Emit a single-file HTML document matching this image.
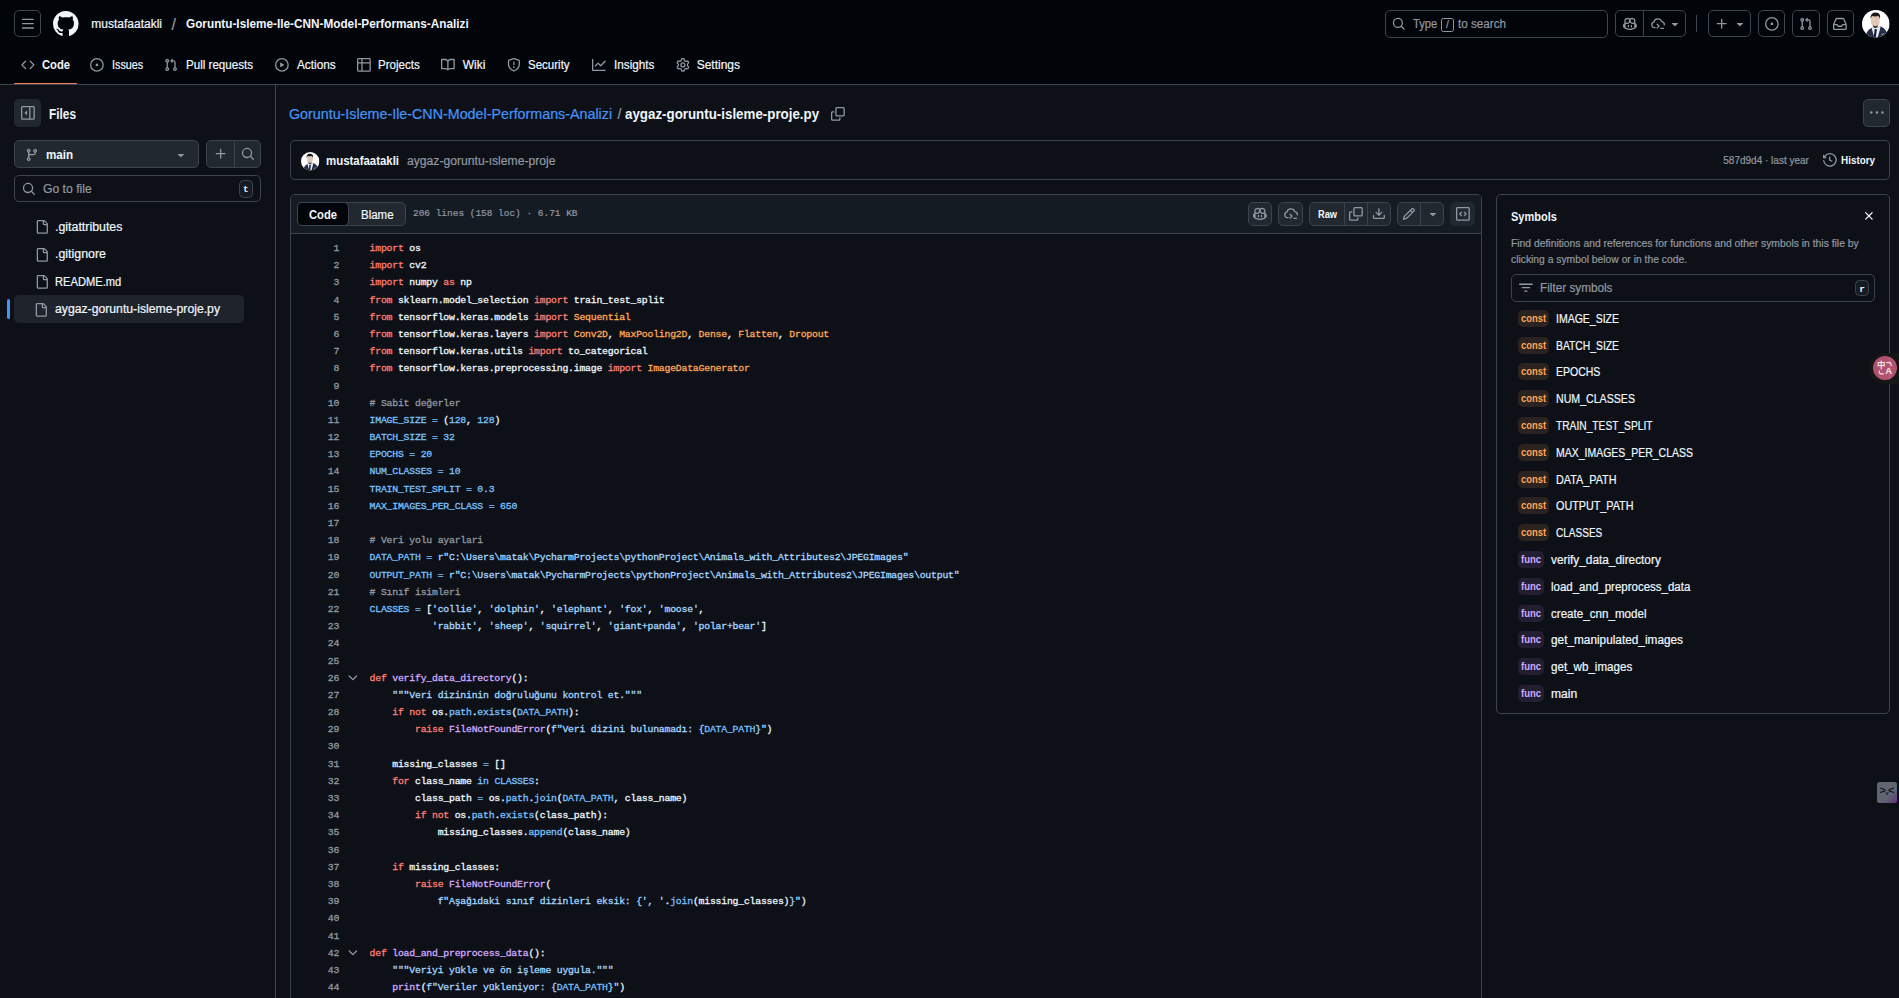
<!DOCTYPE html>
<html lang="en"><head><meta charset="utf-8"><title>Goruntu-Isleme-Ile-CNN-Model-Performans-Analizi/aygaz-goruntu-isleme-proje.py at main</title>
<style>
html,body{margin:0;padding:0;background:#0d1117;}
body{width:1899px;height:998px;overflow:hidden;position:relative;font-family:"Liberation Sans", sans-serif;color:#f0f6fc;}
.b,.i,.t,.ln,.cl{position:absolute;}
.i{overflow:visible;}
.t,.ln,.cl{white-space:pre;}
.t{transform-origin:0 0;-webkit-text-stroke:0.2px currentColor;}
.ln,.cl{font-family:"Liberation Mono", monospace;font-size:9.8px;line-height:13px;letter-spacing:-0.2080px;}
.ln,.cl{-webkit-text-stroke:0.3px currentColor;}
.ln{left:300px;width:39.21px;text-align:right;color:#9198a1;}
.cl{left:369.6px;color:#f0f6fc;}
.k{color:#ff7b72}.c{color:#79c0ff}.s{color:#a5d6ff}.e{color:#d2a8ff}.v{color:#ffa657}.m{color:#9198a1}
</style></head><body>
<div class="b" style="left:0px;top:0px;width:1899px;height:84px;background:#010409;"></div>
<div class="b" style="left:0px;top:84px;width:1899px;height:1px;background:#3d444d;"></div>
<div class="b" style="left:14px;top:10px;width:27px;height:27px;border:1px solid #3d444d;border-radius:5px;box-sizing:border-box;"></div>
<svg class="i" style="left:20.6px;top:16.6px;width:13.8px;height:13.8px;fill:#9198a1;" viewBox="0 0 16 16"><path d="M1 2.75A.75.75 0 0 1 1.75 2h12.5a.75.75 0 0 1 0 1.5H1.75A.75.75 0 0 1 1 2.75Zm0 5A.75.75 0 0 1 1.75 7h12.5a.75.75 0 0 1 0 1.5H1.75A.75.75 0 0 1 1 7.75ZM1.75 12h12.5a.75.75 0 0 1 0 1.5H1.75a.75.75 0 0 1 0-1.5Z"/></svg>
<svg class="i" style="left:52.9px;top:10.8px;width:25.6px;height:25.6px;fill:#f0f6fc;" viewBox="0 0 16 16"><path d="M8 0c4.42 0 8 3.58 8 8a8.013 8.013 0 0 1-5.45 7.59c-.4.08-.55-.17-.55-.38 0-.27.01-1.13.01-2.2 0-.75-.25-1.23-.54-1.48 1.78-.2 3.65-.88 3.65-3.95 0-.88-.31-1.59-.82-2.15.08-.2.36-1.02-.08-2.12 0 0-.67-.22-2.2.82-.64-.18-1.32-.27-2-.27-.68 0-1.36.09-2 .27-1.53-1.03-2.2-.82-2.2-.82-.44 1.1-.16 1.92-.08 2.12-.51.56-.82 1.28-.82 2.15 0 3.06 1.86 3.75 3.64 3.95-.23.2-.44.55-.51 1.07-.46.21-1.61.55-2.33-.66-.15-.24-.6-.83-1.23-.82-.67.01-.27.38.01.53.34.19.73.9.82 1.13.16.45.68 1.31 2.69.94 0 .67.01 1.3.01 1.49 0 .21-.15.45-.55.38A7.995 7.995 0 0 1 0 8c0-4.42 3.58-8 8-8Z"/></svg>
<div class="b" style="left:1385px;top:10px;width:223px;height:27.5px;border:1px solid #3d444d;border-radius:5px;box-sizing:border-box;"></div>
<svg class="i" style="left:1392.3px;top:17px;width:13.5px;height:13.5px;fill:#9198a1;" viewBox="0 0 16 16"><path d="M10.68 11.74a6 6 0 0 1-7.922-8.982 6 6 0 0 1 8.982 7.922l3.04 3.04a.749.749 0 0 1-.326 1.275.749.749 0 0 1-.734-.215ZM11.5 7a4.499 4.499 0 1 0-8.997 0A4.499 4.499 0 0 0 11.5 7Z"/></svg>
<div class="b" style="left:1441px;top:18px;width:13px;height:13.6px;border:1px solid #9198a1;border-radius:2.5px;box-sizing:border-box;"></div>
<div class="b" style="left:1615px;top:10px;width:71px;height:27px;border:1px solid #3d444d;border-radius:5px;box-sizing:border-box;"></div>
<div class="b" style="left:1643px;top:10px;width:1px;height:27px;background:#3d444d;"></div>
<svg class="i" style="left:1623.2px;top:16.9px;width:13.8px;height:13.8px;fill:#9198a1;" viewBox="0 0 16 16"><path d="M7.998 15.035c-4.562 0-7.873-2.914-7.998-3.749V9.338c.085-.628.677-1.686 1.588-2.065.013-.07.024-.143.036-.218.029-.183.06-.384.126-.612-.201-.508-.254-1.084-.254-1.656 0-.87.128-1.769.693-2.484.579-.733 1.494-1.124 2.724-1.261 1.206-.134 2.262.034 2.944.765.05.053.096.108.139.165.044-.057.094-.112.143-.165.682-.731 1.738-.899 2.944-.765 1.23.137 2.145.528 2.724 1.261.566.715.693 1.614.693 2.484 0 .572-.053 1.148-.254 1.656.066.228.098.429.126.612.012.076.024.148.037.218.924.385 1.522 1.471 1.591 2.095v1.872c0 .766-3.351 3.795-8.002 3.795Zm0-1.485c2.28 0 4.584-1.11 5.002-1.433V7.862l-.023-.116c-.49.21-1.075.291-1.727.291-1.146 0-2.059-.327-2.71-.991A3.222 3.222 0 0 1 8 6.303a3.24 3.24 0 0 1-.544.743c-.65.664-1.563.991-2.71.991-.652 0-1.236-.081-1.727-.291l-.023.116v4.255c.419.323 2.722 1.433 5.002 1.433ZM6.762 2.83c-.193-.206-.637-.413-1.682-.297-1.019.113-1.479.404-1.713.7-.247.312-.369.789-.369 1.554 0 .793.129 1.171.308 1.371.162.181.519.379 1.442.379.853 0 1.339-.235 1.638-.54.315-.322.527-.827.617-1.553.117-.935-.037-1.395-.241-1.614Zm4.155-.297c-1.044-.116-1.488.091-1.681.297-.204.219-.359.679-.242 1.614.091.726.303 1.231.618 1.553.299.305.784.54 1.638.54.922 0 1.28-.198 1.442-.379.179-.2.308-.578.308-1.371 0-.765-.123-1.242-.37-1.554-.233-.296-.693-.587-1.713-.7Z M6.25 9.037a.75.75 0 0 1 .75.75v1.501a.75.75 0 0 1-1.5 0V9.787a.75.75 0 0 1 .75-.75Zm4.25.75v1.501a.75.75 0 0 1-1.5 0V9.787a.75.75 0 0 1 1.5 0Z"/></svg>
<svg class="i" style="left:1651px;top:16.6px;width:14px;height:14px;fill:none;stroke:#9198a1;stroke-width:1.5;stroke-linecap:round;stroke-linejoin:round" viewBox="0 0 16 16"><path d="M4.6 12.2H4.2A3.2 3.2 0 0 1 3.3 5.9 4.6 4.6 0 0 1 12.2 5.3 3.4 3.4 0 0 1 15.2 8.9"/><path d="M7 8.3l2.2 2.1L7 12.6"/><path d="M11.3 12.9h3"/></svg>
<svg class="i" style="left:1668px;top:17px;width:13.8px;height:13.8px;fill:#9198a1;" viewBox="0 0 16 16"><path d="m4.427 7.427 3.396 3.396a.25.25 0 0 0 .354 0l3.396-3.396A.25.25 0 0 0 11.396 7H4.604a.25.25 0 0 0-.177.427Z"/></svg>
<div class="b" style="left:1696px;top:15px;width:1px;height:17px;background:#3d444d;"></div>
<div class="b" style="left:1708px;top:10px;width:43px;height:27px;border:1px solid #3d444d;border-radius:5px;box-sizing:border-box;"></div>
<svg class="i" style="left:1714.8px;top:17.2px;width:13.8px;height:13.8px;fill:#9198a1;" viewBox="0 0 16 16"><path d="M7.75 2a.75.75 0 0 1 .75.75V7h4.25a.75.75 0 0 1 0 1.5H8.5v4.25a.75.75 0 0 1-1.5 0V8.5H2.75a.75.75 0 0 1 0-1.5H7V2.75A.75.75 0 0 1 7.75 2Z"/></svg>
<svg class="i" style="left:1733px;top:17.2px;width:13.8px;height:13.8px;fill:#9198a1;" viewBox="0 0 16 16"><path d="m4.427 7.427 3.396 3.396a.25.25 0 0 0 .354 0l3.396-3.396A.25.25 0 0 0 11.396 7H4.604a.25.25 0 0 0-.177.427Z"/></svg>
<div class="b" style="left:1758px;top:10px;width:27.3px;height:27px;border:1px solid #3d444d;border-radius:5px;box-sizing:border-box;"></div>
<svg class="i" style="left:1764.9px;top:16.9px;width:13.8px;height:13.8px;fill:#9198a1;" viewBox="0 0 16 16"><path d="M8 9.5a1.5 1.5 0 1 0 0-3 1.5 1.5 0 0 0 0 3Z M8 0a8 8 0 1 1 0 16A8 8 0 0 1 8 0ZM1.5 8a6.5 6.5 0 1 0 13 0 6.5 6.5 0 0 0-13 0Z"/></svg>
<div class="b" style="left:1792.3px;top:10px;width:27.4px;height:27px;border:1px solid #3d444d;border-radius:5px;box-sizing:border-box;"></div>
<svg class="i" style="left:1798.9px;top:16.9px;width:13.8px;height:13.8px;fill:#9198a1;" viewBox="0 0 16 16"><path d="M1.5 3.25a2.25 2.25 0 1 1 3 2.122v5.256a2.251 2.251 0 1 1-1.5 0V5.372A2.25 2.25 0 0 1 1.5 3.25Zm5.677-.177L9.573.677A.25.25 0 0 1 10 .854V2.5h1A2.5 2.5 0 0 1 13.5 5v5.628a2.251 2.251 0 1 1-1.5 0V5a1 1 0 0 0-1-1h-1v1.646a.25.25 0 0 1-.427.177L7.177 3.427a.25.25 0 0 1 0-.354ZM3.75 2.5a.75.75 0 1 0 0 1.5.75.75 0 0 0 0-1.5Zm0 9.5a.75.75 0 1 0 0 1.5.75.75 0 0 0 0-1.5Zm8.25.75a.75.75 0 1 0 1.5 0 .75.75 0 0 0-1.5 0Z"/></svg>
<div class="b" style="left:1826.5px;top:10px;width:27.5px;height:27px;border:1px solid #3d444d;border-radius:5px;box-sizing:border-box;"></div>
<svg class="i" style="left:1832.9px;top:16.9px;width:13.8px;height:13.8px;fill:#9198a1;" viewBox="0 0 16 16"><path d="M2.8 2.06A1.75 1.75 0 0 1 4.41 1h7.18c.7 0 1.333.417 1.61 1.06l2.74 6.395c.04.093.06.194.06.295v4.5A1.75 1.75 0 0 1 14.25 15H1.75A1.75 1.75 0 0 1 0 13.25v-4.5c0-.101.02-.202.06-.295Zm1.61.44a.25.25 0 0 0-.23.152L1.887 8H4.75a.75.75 0 0 1 .6.3L6.625 10h2.75l1.275-1.7a.75.75 0 0 1 .6-.3h2.863L11.82 2.652a.25.25 0 0 0-.23-.152Zm10.09 7h-2.875l-1.275 1.7a.75.75 0 0 1-.6.3h-3.5a.75.75 0 0 1-.6-.3L4.375 9.5H1.5v3.75c0 .138.112.25.25.25h12.5a.25.25 0 0 0 .25-.25Z"/></svg>
<svg class="i" style="left:1861.8px;top:9.7px;width:27.6px;height:27.6px" viewBox="0 0 28 28"><defs><clipPath id="av"><circle cx="14" cy="14" r="14"/></clipPath></defs><g clip-path="url(#av)"><rect width="28" height="28" fill="#ffffff"/><path d="M9.3 13.2c-.4-2.500-.3-5.200.7-6.500 1.500-1.400 5.400-1.300 7 .1 1 1.300 1.100 4 .7 6.400-.3 2-1.700 4.300-4.200 4.300s-3.900-2.300-4.200-4.300z" fill="#e2c7b7"/><path d="M8.700 9.400c-.5-3.200 1-5.900 3.300-6.600 2.600-.8 5.300.2 6 2 .6 1.500.4 3.300.1 4.600-.3-1.600-.8-2.700-1.600-3.200-1.600.5-4.300.5-5.900 0-.9.600-1.500 1.700-1.900 3.200z" fill="#1d1a1c"/><path d="M11.300 15.300c.7.900 1.500 1.300 2.300 1.300s1.700-.4 2.400-1.300l-.3 2.100-2.100 1.200-2-1.200z" fill="#2b2322"/><path d="M3.800 28c.2-5.500 2.600-8.700 7-10.300l2.700 2.800 4.300-4.200c4.800 1.500 8 5.200 8.700 11.700z" fill="#262e47"/><path d="M10.800 17.500l-.9 1.300 2.500 9.200h3.500l3-10.900-1-.9-4.300 4.300z" fill="#e6eef8"/><path d="M12.900 19.400l1.700 0 .4 1.200-.9 7.400h-2.300l.9-7.400z" fill="#1b2033"/><path d="M19.500 24.800l3-1.100.2.500-3 1.100z" fill="#dfe6f0"/></g></svg>
<svg class="i" style="left:21px;top:57.8px;width:13.8px;height:13.8px;fill:#9198a1;" viewBox="0 0 16 16"><path d="m11.28 3.22 4.25 4.25a.75.75 0 0 1 0 1.06l-4.25 4.25a.749.749 0 0 1-1.275-.326.749.749 0 0 1 .215-.734L13.94 8l-3.72-3.72a.749.749 0 0 1 .326-1.275.749.749 0 0 1 .734.215Zm-6.56 0a.751.751 0 0 1 1.042.018.751.751 0 0 1 .018 1.042L2.06 8l3.72 3.72a.749.749 0 0 1-.326 1.275.749.749 0 0 1-.734-.215L.47 8.53a.75.75 0 0 1 0-1.06Z"/></svg>
<svg class="i" style="left:90px;top:57.8px;width:13.8px;height:13.8px;fill:#9198a1;" viewBox="0 0 16 16"><path d="M8 9.5a1.5 1.5 0 1 0 0-3 1.5 1.5 0 0 0 0 3Z M8 0a8 8 0 1 1 0 16A8 8 0 0 1 8 0ZM1.5 8a6.5 6.5 0 1 0 13 0 6.5 6.5 0 0 0-13 0Z"/></svg>
<svg class="i" style="left:164px;top:57.8px;width:13.8px;height:13.8px;fill:#9198a1;" viewBox="0 0 16 16"><path d="M1.5 3.25a2.25 2.25 0 1 1 3 2.122v5.256a2.251 2.251 0 1 1-1.5 0V5.372A2.25 2.25 0 0 1 1.5 3.25Zm5.677-.177L9.573.677A.25.25 0 0 1 10 .854V2.5h1A2.5 2.5 0 0 1 13.5 5v5.628a2.251 2.251 0 1 1-1.5 0V5a1 1 0 0 0-1-1h-1v1.646a.25.25 0 0 1-.427.177L7.177 3.427a.25.25 0 0 1 0-.354ZM3.75 2.5a.75.75 0 1 0 0 1.5.75.75 0 0 0 0-1.5Zm0 9.5a.75.75 0 1 0 0 1.5.75.75 0 0 0 0-1.5Zm8.25.75a.75.75 0 1 0 1.5 0 .75.75 0 0 0-1.5 0Z"/></svg>
<svg class="i" style="left:275px;top:57.8px;width:13.8px;height:13.8px;fill:#9198a1;" viewBox="0 0 16 16"><path d="M8 0a8 8 0 1 1 0 16A8 8 0 0 1 8 0ZM1.5 8a6.5 6.5 0 1 0 13 0 6.5 6.5 0 0 0-13 0Zm4.879-2.773 4.264 2.559a.25.25 0 0 1 0 .428l-4.264 2.559A.25.25 0 0 1 6 10.559V5.442a.25.25 0 0 1 .379-.215Z"/></svg>
<svg class="i" style="left:357px;top:57.8px;width:13.8px;height:13.8px;fill:#9198a1;" viewBox="0 0 16 16"><path d="M0 1.75C0 .784.784 0 1.75 0h12.5C15.216 0 16 .784 16 1.75v12.5A1.75 1.75 0 0 1 14.25 16H1.75A1.75 1.75 0 0 1 0 14.25ZM6.5 6.5v8h7.75a.25.25 0 0 0 .25-.25V6.5Zm8-1.5V1.75a.25.25 0 0 0-.25-.25H6.5V5Zm-13 1.5v7.75c0 .138.112.25.25.25H5v-8ZM5 5V1.5H1.75a.25.25 0 0 0-.25.25V5Z"/></svg>
<svg class="i" style="left:441px;top:57.8px;width:13.8px;height:13.8px;fill:#9198a1;" viewBox="0 0 16 16"><path d="M0 1.75A.75.75 0 0 1 .75 1h4.253c1.227 0 2.317.59 3 1.501A3.743 3.743 0 0 1 11.006 1h4.245a.75.75 0 0 1 .75.75v10.5a.75.75 0 0 1-.75.75h-4.507a2.25 2.25 0 0 0-1.591.659l-.622.621a.75.75 0 0 1-1.06 0l-.622-.621A2.25 2.25 0 0 0 5.258 13H.75a.75.75 0 0 1-.75-.75Zm7.251 10.324.004-5.073-.002-2.253A2.25 2.25 0 0 0 5.003 2.5H1.5v9h3.757a3.75 3.75 0 0 1 1.994.574ZM8.755 4.75l-.004 7.322a3.752 3.752 0 0 1 1.992-.572H14.5v-9h-3.495a2.25 2.25 0 0 0-2.25 2.25Z"/></svg>
<svg class="i" style="left:507px;top:57.8px;width:13.8px;height:13.8px;fill:#9198a1;" viewBox="0 0 16 16"><path d="M7.467.133a1.748 1.748 0 0 1 1.066 0l5.25 1.68A1.75 1.75 0 0 1 15 3.48V7c0 1.566-.32 3.182-1.303 4.682-.983 1.498-2.585 2.813-5.032 3.855a1.697 1.697 0 0 1-1.33 0c-2.447-1.042-4.049-2.357-5.032-3.855C1.32 10.182 1 8.566 1 7V3.48a1.75 1.75 0 0 1 1.217-1.667Zm.61 1.429a.25.25 0 0 0-.153 0l-5.25 1.68a.25.25 0 0 0-.174.238V7c0 1.358.275 2.666 1.057 3.86.784 1.194 2.121 2.34 4.366 3.297a.196.196 0 0 0 .154 0c2.245-.956 3.582-2.104 4.366-3.298C13.225 9.666 13.5 8.36 13.5 7V3.48a.251.251 0 0 0-.174-.237l-5.25-1.68ZM8.75 4.75v3a.75.75 0 0 1-1.5 0v-3a.75.75 0 0 1 1.5 0ZM9 10.5a1 1 0 1 1-2 0 1 1 0 0 1 2 0Z"/></svg>
<svg class="i" style="left:591.7px;top:57.8px;width:13.8px;height:13.8px;fill:#9198a1;" viewBox="0 0 16 16"><path d="M1.5 1.75V13.5h13.75a.75.75 0 0 1 0 1.5H.75a.75.75 0 0 1-.75-.75V1.75a.75.75 0 0 1 1.5 0Zm14.28 2.53-5.25 5.25a.75.75 0 0 1-1.06 0L7 7.06 4.28 9.78a.751.751 0 0 1-1.042-.018.751.751 0 0 1-.018-1.042l3.25-3.25a.75.75 0 0 1 1.06 0L10 7.94l4.72-4.72a.751.751 0 0 1 1.042.018.751.751 0 0 1 .018 1.042Z"/></svg>
<svg class="i" style="left:676px;top:57.8px;width:13.8px;height:13.8px;fill:#9198a1;" viewBox="0 0 16 16"><path d="M8 0a8.2 8.2 0 0 1 .701.031C9.444.095 9.99.645 10.16 1.29l.288 1.107c.018.066.079.158.212.224.231.114.454.243.668.386.123.082.233.09.299.071l1.103-.303c.644-.176 1.392.021 1.82.63.27.385.506.792.704 1.218.315.675.111 1.422-.364 1.891l-.814.806c-.049.048-.098.147-.088.294.016.257.016.515 0 .772-.01.147.038.246.088.294l.814.806c.475.469.679 1.216.364 1.891a7.977 7.977 0 0 1-.704 1.217c-.428.61-1.176.807-1.82.63l-1.102-.302c-.067-.019-.177-.011-.3.071a5.909 5.909 0 0 1-.668.386c-.133.066-.194.158-.211.224l-.29 1.106c-.168.646-.715 1.196-1.458 1.26a8.006 8.006 0 0 1-1.402 0c-.743-.064-1.289-.614-1.458-1.26l-.289-1.106c-.018-.066-.079-.158-.212-.224a5.738 5.738 0 0 1-.668-.386c-.123-.082-.233-.09-.299-.071l-1.103.303c-.644.176-1.392-.021-1.82-.63a8.12 8.12 0 0 1-.704-1.218c-.315-.675-.111-1.422.363-1.891l.815-.806c.05-.048.098-.147.088-.294a6.214 6.214 0 0 1 0-.772c.01-.147-.038-.246-.088-.294l-.815-.806C.635 6.045.431 5.298.746 4.623a7.92 7.92 0 0 1 .704-1.217c.428-.61 1.176-.807 1.82-.63l1.102.302c.067.019.177.011.3-.071.214-.143.437-.272.668-.386.133-.066.194-.158.211-.224l.29-1.106C6.009.645 6.556.095 7.299.03 7.53.01 7.764 0 8 0Zm-.571 1.525c-.036.003-.108.036-.137.146l-.289 1.105c-.147.561-.549.967-.998 1.189-.173.086-.34.183-.5.29-.417.278-.97.423-1.529.27l-1.103-.303c-.109-.03-.175.016-.195.045-.22.312-.412.644-.573.99-.014.031-.021.11.059.19l.815.806c.411.406.562.957.53 1.456a4.709 4.709 0 0 0 0 .582c.032.499-.119 1.05-.53 1.456l-.815.806c-.081.08-.073.159-.059.19.162.346.353.677.573.989.02.03.085.076.195.046l1.102-.303c.56-.153 1.113-.008 1.53.27.161.107.328.204.501.29.447.222.85.629.997 1.189l.289 1.105c.029.109.101.143.137.146a6.6 6.6 0 0 0 1.142 0c.036-.003.108-.036.137-.146l.289-1.105c.147-.561.549-.967.998-1.189.173-.086.34-.183.5-.29.417-.278.97-.423 1.529-.27l1.103.303c.109.029.175-.016.195-.045.22-.313.411-.644.573-.99.014-.031.021-.11-.059-.19l-.815-.806c-.411-.406-.562-.957-.53-1.456a4.709 4.709 0 0 0 0-.582c-.032-.499.119-1.05.53-1.456l.815-.806c.081-.08.073-.159.059-.19a6.464 6.464 0 0 0-.573-.989c-.02-.03-.085-.076-.195-.046l-1.102.303c-.56.153-1.113.008-1.53-.27a4.44 4.44 0 0 0-.501-.29c-.447-.222-.85-.629-.997-1.189l-.289-1.105c-.029-.11-.101-.143-.137-.146a6.6 6.6 0 0 0-1.142 0ZM11 8a3 3 0 1 1-6 0 3 3 0 0 1 6 0ZM9.5 8a1.5 1.5 0 1 0-3.001.001A1.5 1.5 0 0 0 9.5 8Z"/></svg>
<div class="b" style="left:14px;top:82.7px;width:62.5px;height:1.8px;background:#f78166;border-radius:1px;"></div>
<div class="b" style="left:275px;top:85px;width:1px;height:913px;background:#3d444d;"></div>
<div class="b" style="left:14px;top:99px;width:27px;height:27.5px;background:#212830;border-radius:5px;"></div>
<svg class="i" style="left:20.9px;top:105.9px;width:13.8px;height:13.8px;fill:#9198a1;" viewBox="0 0 16 16"><path d="m4.177 7.823 2.396-2.396A.25.25 0 0 1 7 5.604v4.792a.25.25 0 0 1-.427.177L4.177 8.177a.25.25 0 0 1 0-.354Z M0 1.75C0 .784.784 0 1.75 0h12.5C15.216 0 16 .784 16 1.75v12.5A1.75 1.75 0 0 1 14.25 16H1.75A1.75 1.75 0 0 1 0 14.25Zm1.75-.25a.25.25 0 0 0-.25.25v12.5c0 .138.112.25.25.25H9.5v-13Zm12.5 13a.25.25 0 0 0 .25-.25V1.75a.25.25 0 0 0-.25-.25H11v13Z"/></svg>
<div class="b" style="left:14px;top:140px;width:185px;height:28px;background:#212830;border:1px solid #3d444d;border-radius:5px;box-sizing:border-box;"></div>
<svg class="i" style="left:24.8px;top:148.2px;width:13.8px;height:13.8px;fill:#9198a1;" viewBox="0 0 16 16"><path d="M9.5 3.25a2.25 2.25 0 1 1 3 2.122V6A2.5 2.5 0 0 1 10 8.5H6a1 1 0 0 0-1 1v1.128a2.251 2.251 0 1 1-1.5 0V5.372a2.25 2.25 0 1 1 1.5 0v1.836A2.493 2.493 0 0 1 6 7h4a1 1 0 0 0 1-1v-.628A2.25 2.25 0 0 1 9.5 3.25Zm-6 0a.75.75 0 1 0 1.5 0 .75.75 0 0 0-1.5 0Zm8.25-.75a.75.75 0 1 0 0 1.5.75.75 0 0 0 0-1.5ZM4.25 12a.75.75 0 1 0 0 1.5.75.75 0 0 0 0-1.5Z"/></svg>
<svg class="i" style="left:174.2px;top:148px;width:13.8px;height:13.8px;fill:#9198a1;" viewBox="0 0 16 16"><path d="m4.427 7.427 3.396 3.396a.25.25 0 0 0 .354 0l3.396-3.396A.25.25 0 0 0 11.396 7H4.604a.25.25 0 0 0-.177.427Z"/></svg>
<div class="b" style="left:206px;top:140px;width:55px;height:28px;background:#212830;border:1px solid #3d444d;border-radius:5px;box-sizing:border-box;"></div>
<div class="b" style="left:234px;top:140px;width:1px;height:28px;background:#3d444d;"></div>
<svg class="i" style="left:214.4px;top:147.2px;width:13.8px;height:13.8px;fill:#9198a1;" viewBox="0 0 16 16"><path d="M7.75 2a.75.75 0 0 1 .75.75V7h4.25a.75.75 0 0 1 0 1.5H8.5v4.25a.75.75 0 0 1-1.5 0V8.5H2.75a.75.75 0 0 1 0-1.5H7V2.75A.75.75 0 0 1 7.75 2Z"/></svg>
<svg class="i" style="left:241px;top:147px;width:13.8px;height:13.8px;fill:#9198a1;" viewBox="0 0 16 16"><path d="M10.68 11.74a6 6 0 0 1-7.922-8.982 6 6 0 0 1 8.982 7.922l3.04 3.04a.749.749 0 0 1-.326 1.275.749.749 0 0 1-.734-.215ZM11.5 7a4.499 4.499 0 1 0-8.997 0A4.499 4.499 0 0 0 11.5 7Z"/></svg>
<div class="b" style="left:14px;top:175px;width:247px;height:27px;border:1px solid #3d444d;border-radius:5px;box-sizing:border-box;"></div>
<svg class="i" style="left:22.3px;top:181.8px;width:13.8px;height:13.8px;fill:#9198a1;" viewBox="0 0 16 16"><path d="M10.68 11.74a6 6 0 0 1-7.922-8.982 6 6 0 0 1 8.982 7.922l3.04 3.04a.749.749 0 0 1-.326 1.275.749.749 0 0 1-.734-.215ZM11.5 7a4.499 4.499 0 1 0-8.997 0A4.499 4.499 0 0 0 11.5 7Z"/></svg>
<div class="b" style="left:239.3px;top:180.4px;width:13.5px;height:17.3px;background:#151b23;border:1px solid #3d444d;border-radius:4.5px;box-sizing:border-box;"></div>
<div class="b" style="left:14px;top:295px;width:230px;height:28px;background:#1f242c;border-radius:5px;"></div>
<div class="b" style="left:7px;top:299.3px;width:3.4px;height:19.5px;background:#4493f8;border-radius:2px;"></div>
<svg class="i" style="left:34.5px;top:220.10000000000002px;width:13.8px;height:13.8px;fill:#9198a1;" viewBox="0 0 16 16"><path d="M2 1.75C2 .784 2.784 0 3.75 0h6.586c.464 0 .909.184 1.237.513l2.914 2.914c.329.328.513.773.513 1.237v9.586A1.75 1.75 0 0 1 13.25 16h-9.5A1.75 1.75 0 0 1 2 14.25Zm1.75-.25a.25.25 0 0 0-.25.25v12.5c0 .138.112.25.25.25h9.5a.25.25 0 0 0 .25-.25V6h-2.75A1.75 1.75 0 0 1 9 4.25V1.5Zm6.75.062V4.25c0 .138.112.25.25.25h2.688l-.011-.013-2.914-2.914-.013-.011Z"/></svg>
<svg class="i" style="left:34.5px;top:247.60000000000002px;width:13.8px;height:13.8px;fill:#9198a1;" viewBox="0 0 16 16"><path d="M2 1.75C2 .784 2.784 0 3.75 0h6.586c.464 0 .909.184 1.237.513l2.914 2.914c.329.328.513.773.513 1.237v9.586A1.75 1.75 0 0 1 13.25 16h-9.5A1.75 1.75 0 0 1 2 14.25Zm1.75-.25a.25.25 0 0 0-.25.25v12.5c0 .138.112.25.25.25h9.5a.25.25 0 0 0 .25-.25V6h-2.75A1.75 1.75 0 0 1 9 4.25V1.5Zm6.75.062V4.25c0 .138.112.25.25.25h2.688l-.011-.013-2.914-2.914-.013-.011Z"/></svg>
<svg class="i" style="left:34.5px;top:275.1px;width:13.8px;height:13.8px;fill:#9198a1;" viewBox="0 0 16 16"><path d="M2 1.75C2 .784 2.784 0 3.75 0h6.586c.464 0 .909.184 1.237.513l2.914 2.914c.329.328.513.773.513 1.237v9.586A1.75 1.75 0 0 1 13.25 16h-9.5A1.75 1.75 0 0 1 2 14.25Zm1.75-.25a.25.25 0 0 0-.25.25v12.5c0 .138.112.25.25.25h9.5a.25.25 0 0 0 .25-.25V6h-2.75A1.75 1.75 0 0 1 9 4.25V1.5Zm6.75.062V4.25c0 .138.112.25.25.25h2.688l-.011-.013-2.914-2.914-.013-.011Z"/></svg>
<svg class="i" style="left:34.3px;top:302.6px;width:13.8px;height:13.8px;fill:#9198a1;" viewBox="0 0 16 16"><path d="M2 1.75C2 .784 2.784 0 3.75 0h6.586c.464 0 .909.184 1.237.513l2.914 2.914c.329.328.513.773.513 1.237v9.586A1.75 1.75 0 0 1 13.25 16h-9.5A1.75 1.75 0 0 1 2 14.25Zm1.75-.25a.25.25 0 0 0-.25.25v12.5c0 .138.112.25.25.25h9.5a.25.25 0 0 0 .25-.25V6h-2.75A1.75 1.75 0 0 1 9 4.25V1.5Zm6.75.062V4.25c0 .138.112.25.25.25h2.688l-.011-.013-2.914-2.914-.013-.011Z"/></svg>
<svg class="i" style="left:831.3px;top:106.8px;width:13.8px;height:13.8px;fill:#9198a1;" viewBox="0 0 16 16"><path d="M0 6.75C0 5.784.784 5 1.75 5h1.5a.75.75 0 0 1 0 1.5h-1.5a.25.25 0 0 0-.25.25v7.5c0 .138.112.25.25.25h7.5a.25.25 0 0 0 .25-.25v-1.5a.75.75 0 0 1 1.5 0v1.5A1.75 1.75 0 0 1 9.25 16h-7.5A1.75 1.75 0 0 1 0 14.25Z M5 1.75C5 .784 5.784 0 6.75 0h7.5C15.216 0 16 .784 16 1.75v7.5A1.75 1.75 0 0 1 14.25 11h-7.5A1.75 1.75 0 0 1 5 9.25Zm1.75-.25a.25.25 0 0 0-.25.25v7.5c0 .138.112.25.25.25h7.5a.25.25 0 0 0 .25-.25v-7.5a.25.25 0 0 0-.25-.25Z"/></svg>
<div class="b" style="left:1863px;top:99px;width:27px;height:27.5px;background:#212830;border:1px solid #3d444d;border-radius:5px;box-sizing:border-box;"></div>
<svg class="i" style="left:1869.7px;top:105.8px;width:13.8px;height:13.8px;fill:#9198a1;" viewBox="0 0 16 16"><path d="M8 9a1.5 1.5 0 1 0 0-3 1.5 1.5 0 0 0 0 3ZM1.5 9a1.5 1.5 0 1 0 0-3 1.5 1.5 0 0 0 0 3Zm13 0a1.5 1.5 0 1 0 0-3 1.5 1.5 0 0 0 0 3Z"/></svg>
<div class="b" style="left:290px;top:140px;width:1600px;height:40px;border:1px solid #3d444d;border-radius:5px;box-sizing:border-box;"></div>
<svg class="i" style="left:301.3px;top:151.8px;width:18.4px;height:18.4px" viewBox="0 0 28 28"><defs><clipPath id="av2"><circle cx="14" cy="14" r="14"/></clipPath></defs><g clip-path="url(#av2)"><rect width="28" height="28" fill="#ffffff"/><path d="M9.3 13.2c-.4-2.500-.3-5.200.7-6.500 1.500-1.400 5.400-1.300 7 .1 1 1.300 1.100 4 .7 6.400-.3 2-1.700 4.300-4.200 4.300s-3.900-2.300-4.200-4.300z" fill="#e2c7b7"/><path d="M8.700 9.400c-.5-3.200 1-5.900 3.300-6.600 2.600-.8 5.300.2 6 2 .6 1.500.4 3.300.1 4.600-.3-1.600-.8-2.700-1.600-3.200-1.600.5-4.300.5-5.900 0-.9.600-1.500 1.700-1.900 3.200z" fill="#1d1a1c"/><path d="M11.300 15.300c.7.900 1.500 1.300 2.300 1.300s1.700-.4 2.400-1.300l-.3 2.100-2.100 1.200-2-1.200z" fill="#2b2322"/><path d="M3.800 28c.2-5.500 2.600-8.700 7-10.300l2.700 2.800 4.300-4.200c4.800 1.500 8 5.200 8.700 11.700z" fill="#262e47"/><path d="M10.800 17.500l-.9 1.300 2.500 9.200h3.500l3-10.900-1-.9-4.300 4.300z" fill="#e6eef8"/><path d="M12.900 19.400l1.700 0 .4 1.200-.9 7.400h-2.300l.9-7.400z" fill="#1b2033"/><path d="M19.500 24.800l3-1.100.2.500-3 1.100z" fill="#dfe6f0"/></g></svg>
<svg class="i" style="left:1822.8px;top:153.2px;width:13.8px;height:13.8px;fill:#9198a1;" viewBox="0 0 16 16"><path d="m.427 1.927 1.215 1.215a8.002 8.002 0 1 1-1.6 5.685.75.75 0 1 1 1.493-.154 6.5 6.5 0 1 0 1.18-4.458l1.358 1.358A.25.25 0 0 1 3.896 6H.25A.25.25 0 0 1 0 5.75V2.104a.25.25 0 0 1 .427-.177ZM7.75 4a.75.75 0 0 1 .75.75v2.992l2.028.812a.75.75 0 0 1-.557 1.392l-2.5-1A.751.751 0 0 1 7 8.25v-3.5A.75.75 0 0 1 7.75 4Z"/></svg>
<div class="b" style="left:290px;top:194px;width:1192px;height:820px;background:#0d1117;border:1px solid #3d444d;border-radius:5px;box-sizing:border-box;"></div>
<div class="b" style="left:291px;top:195px;width:1190px;height:38px;background:#151b23;border-radius:4px 4px 0 0;"></div>
<div class="b" style="left:291px;top:233px;width:1190px;height:1px;background:#3d444d;"></div>
<div class="b" style="left:297.2px;top:202px;width:108.8px;height:24px;background:#212830;border:1px solid #3d444d;border-radius:5px;box-sizing:border-box;"></div>
<div class="b" style="left:297.2px;top:202px;width:51.7px;height:24px;background:#010409;border:1px solid #3d444d;border-radius:5px;box-sizing:border-box;"></div>
<div class="b" style="left:1248px;top:202px;width:24px;height:24px;background:#212830;border:1px solid #3d444d;border-radius:5px;box-sizing:border-box;"></div>
<svg class="i" style="left:1253.1px;top:207.1px;width:13.8px;height:13.8px;fill:#9198a1;" viewBox="0 0 16 16"><path d="M7.998 15.035c-4.562 0-7.873-2.914-7.998-3.749V9.338c.085-.628.677-1.686 1.588-2.065.013-.07.024-.143.036-.218.029-.183.06-.384.126-.612-.201-.508-.254-1.084-.254-1.656 0-.87.128-1.769.693-2.484.579-.733 1.494-1.124 2.724-1.261 1.206-.134 2.262.034 2.944.765.05.053.096.108.139.165.044-.057.094-.112.143-.165.682-.731 1.738-.899 2.944-.765 1.23.137 2.145.528 2.724 1.261.566.715.693 1.614.693 2.484 0 .572-.053 1.148-.254 1.656.066.228.098.429.126.612.012.076.024.148.037.218.924.385 1.522 1.471 1.591 2.095v1.872c0 .766-3.351 3.795-8.002 3.795Zm0-1.485c2.28 0 4.584-1.11 5.002-1.433V7.862l-.023-.116c-.49.21-1.075.291-1.727.291-1.146 0-2.059-.327-2.71-.991A3.222 3.222 0 0 1 8 6.303a3.24 3.24 0 0 1-.544.743c-.65.664-1.563.991-2.71.991-.652 0-1.236-.081-1.727-.291l-.023.116v4.255c.419.323 2.722 1.433 5.002 1.433ZM6.762 2.83c-.193-.206-.637-.413-1.682-.297-1.019.113-1.479.404-1.713.7-.247.312-.369.789-.369 1.554 0 .793.129 1.171.308 1.371.162.181.519.379 1.442.379.853 0 1.339-.235 1.638-.54.315-.322.527-.827.617-1.553.117-.935-.037-1.395-.241-1.614Zm4.155-.297c-1.044-.116-1.488.091-1.681.297-.204.219-.359.679-.242 1.614.091.726.303 1.231.618 1.553.299.305.784.54 1.638.54.922 0 1.28-.198 1.442-.379.179-.2.308-.578.308-1.371 0-.765-.123-1.242-.37-1.554-.233-.296-.693-.587-1.713-.7Z M6.25 9.037a.75.75 0 0 1 .75.75v1.501a.75.75 0 0 1-1.5 0V9.787a.75.75 0 0 1 .75-.75Zm4.25.75v1.501a.75.75 0 0 1-1.5 0V9.787a.75.75 0 0 1 1.5 0Z"/></svg>
<div class="b" style="left:1278px;top:202px;width:25px;height:24px;background:#212830;border:1px solid #3d444d;border-radius:5px;box-sizing:border-box;"></div>
<svg class="i" style="left:1283.5px;top:207px;width:14px;height:14px;fill:none;stroke:#9198a1;stroke-width:1.5;stroke-linecap:round;stroke-linejoin:round" viewBox="0 0 16 16"><path d="M4.6 12.2H4.2A3.2 3.2 0 0 1 3.3 5.9 4.6 4.6 0 0 1 12.2 5.3 3.4 3.4 0 0 1 15.2 8.9"/><path d="M7 8.3l2.2 2.1L7 12.6"/><path d="M11.3 12.9h3"/></svg>
<div class="b" style="left:1309px;top:202px;width:82px;height:24px;background:#212830;border:1px solid #3d444d;border-radius:5px;box-sizing:border-box;"></div>
<div class="b" style="left:1344px;top:202px;width:1px;height:24px;background:#3d444d;"></div>
<div class="b" style="left:1367px;top:202px;width:1px;height:24px;background:#3d444d;"></div>
<svg class="i" style="left:1349.2px;top:207.2px;width:13.8px;height:13.8px;fill:#9198a1;" viewBox="0 0 16 16"><path d="M0 6.75C0 5.784.784 5 1.75 5h1.5a.75.75 0 0 1 0 1.5h-1.5a.25.25 0 0 0-.25.25v7.5c0 .138.112.25.25.25h7.5a.25.25 0 0 0 .25-.25v-1.5a.75.75 0 0 1 1.5 0v1.5A1.75 1.75 0 0 1 9.25 16h-7.5A1.75 1.75 0 0 1 0 14.25Z M5 1.75C5 .784 5.784 0 6.75 0h7.5C15.216 0 16 .784 16 1.75v7.5A1.75 1.75 0 0 1 14.25 11h-7.5A1.75 1.75 0 0 1 5 9.25Zm1.75-.25a.25.25 0 0 0-.25.25v7.5c0 .138.112.25.25.25h7.5a.25.25 0 0 0 .25-.25v-7.5a.25.25 0 0 0-.25-.25Z"/></svg>
<svg class="i" style="left:1372.3px;top:207px;width:13.8px;height:13.8px;fill:#9198a1;" viewBox="0 0 16 16"><path d="M2.75 14A1.75 1.75 0 0 1 1 12.25v-2.5a.75.75 0 0 1 1.5 0v2.5c0 .138.112.25.25.25h10.5a.25.25 0 0 0 .25-.25v-2.5a.75.75 0 0 1 1.5 0v2.5A1.75 1.75 0 0 1 13.25 14Z M7.25 7.689V2a.75.75 0 0 1 1.5 0v5.689l1.97-1.969a.749.749 0 1 1 1.06 1.06l-3.25 3.25a.749.749 0 0 1-1.06 0L4.22 6.78a.749.749 0 1 1 1.06-1.06l1.97 1.969Z"/></svg>
<div class="b" style="left:1397px;top:202px;width:47px;height:24px;background:#212830;border:1px solid #3d444d;border-radius:5px;box-sizing:border-box;"></div>
<div class="b" style="left:1420px;top:202px;width:1px;height:24px;background:#3d444d;"></div>
<svg class="i" style="left:1402px;top:207.1px;width:13.8px;height:13.8px;fill:#9198a1;" viewBox="0 0 16 16"><path d="M11.013 1.427a1.75 1.75 0 0 1 2.474 0l1.086 1.086a1.75 1.75 0 0 1 0 2.474l-8.61 8.61c-.21.21-.47.364-.756.445l-3.251.93a.75.75 0 0 1-.927-.928l.929-3.25c.081-.286.235-.547.445-.758l8.61-8.61Zm.176 4.823L9.75 4.81l-6.286 6.287a.253.253 0 0 0-.064.108l-.558 1.953 1.953-.558a.253.253 0 0 0 .108-.064Zm1.238-3.763a.25.25 0 0 0-.354 0L10.811 3.75l1.439 1.44 1.263-1.263a.25.25 0 0 0 0-.354Z"/></svg>
<svg class="i" style="left:1425.6px;top:206.8px;width:13.8px;height:13.8px;fill:#9198a1;" viewBox="0 0 16 16"><path d="m4.427 7.427 3.396 3.396a.25.25 0 0 0 .354 0l3.396-3.396A.25.25 0 0 0 11.396 7H4.604a.25.25 0 0 0-.177.427Z"/></svg>
<div class="b" style="left:1450px;top:202px;width:25px;height:24px;background:#212830;border-radius:5px;"></div>
<svg class="i" style="left:1455.6px;top:207.1px;width:13.8px;height:13.8px;fill:#9198a1;" viewBox="0 0 16 16"><path d="M0 1.75C0 .784.784 0 1.75 0h12.5C15.216 0 16 .784 16 1.75v12.5A1.75 1.75 0 0 1 14.25 16H1.75A1.75 1.75 0 0 1 0 14.25Zm1.75-.25a.25.25 0 0 0-.25.25v12.5c0 .138.112.25.25.25h12.5a.25.25 0 0 0 .25-.25V1.75a.25.25 0 0 0-.25-.25Zm7.47 3.97a.75.75 0 0 1 1.06 0l2 2a.75.75 0 0 1 0 1.06l-2 2a.749.749 0 0 1-1.275-.326.749.749 0 0 1 .215-.734L10.69 8 9.22 6.53a.75.75 0 0 1 0-1.06ZM6.78 6.53 5.31 8l1.47 1.47a.749.749 0 0 1-.326 1.275.749.749 0 0 1-.734-.215l-2-2a.75.75 0 0 1 0-1.06l2-2a.751.751 0 0 1 1.042.018.751.751 0 0 1 .018 1.042Z"/></svg>
<div class="b" style="left:1496px;top:194px;width:394px;height:520px;border:1px solid #3d444d;border-radius:5px;box-sizing:border-box;"></div>
<svg class="i" style="left:1862.2px;top:209px;width:13.8px;height:13.8px;fill:#f0f6fc;" viewBox="0 0 16 16"><path d="M3.72 3.72a.75.75 0 0 1 1.06 0L8 6.94l3.22-3.22a.749.749 0 0 1 1.275.326.749.749 0 0 1-.215.734L9.06 8l3.22 3.22a.749.749 0 0 1-.326 1.275.749.749 0 0 1-.734-.215L8 9.06l-3.22 3.22a.751.751 0 0 1-1.042-.018.751.751 0 0 1-.018-1.042L6.94 8 3.72 4.78a.75.75 0 0 1 0-1.06Z"/></svg>
<div class="b" style="left:1511px;top:274px;width:364px;height:28px;border:1px solid #3d444d;border-radius:5px;box-sizing:border-box;"></div>
<svg class="i" style="left:1519px;top:281.2px;width:13.8px;height:13.8px;fill:#9198a1;" viewBox="0 0 16 16"><path d="M.75 3h14.5a.75.75 0 0 1 0 1.5H.75a.75.75 0 0 1 0-1.5ZM3 7.75A.75.75 0 0 1 3.75 7h8.5a.75.75 0 0 1 0 1.5h-8.5A.75.75 0 0 1 3 7.75Zm3 4a.75.75 0 0 1 .75-.75h2.5a.75.75 0 0 1 0 1.5h-2.5a.75.75 0 0 1-.75-.75Z"/></svg>
<div class="b" style="left:1855px;top:280.4px;width:13.6px;height:16px;background:#151b23;border:1px solid #3d444d;border-radius:4.5px;box-sizing:border-box;"></div>
<div class="b" style="left:1518.2px;top:310.1px;width:30.6px;height:17.2px;background:#2a2320;border-radius:5px;"></div>
<div class="b" style="left:1518.2px;top:337.1px;width:30.6px;height:17.2px;background:#2a2320;border-radius:5px;"></div>
<div class="b" style="left:1518.2px;top:363.1px;width:30.6px;height:17.2px;background:#2a2320;border-radius:5px;"></div>
<div class="b" style="left:1518.2px;top:390.1px;width:30.6px;height:17.2px;background:#2a2320;border-radius:5px;"></div>
<div class="b" style="left:1518.2px;top:417.1px;width:30.6px;height:17.2px;background:#2a2320;border-radius:5px;"></div>
<div class="b" style="left:1518.2px;top:444.1px;width:30.6px;height:17.2px;background:#2a2320;border-radius:5px;"></div>
<div class="b" style="left:1518.2px;top:471.1px;width:30.6px;height:17.2px;background:#2a2320;border-radius:5px;"></div>
<div class="b" style="left:1518.2px;top:497.1px;width:30.6px;height:17.2px;background:#2a2320;border-radius:5px;"></div>
<div class="b" style="left:1518.2px;top:524.1px;width:30.6px;height:17.2px;background:#2a2320;border-radius:5px;"></div>
<div class="b" style="left:1518.2px;top:551.1px;width:25.4px;height:17.2px;background:#221f33;border-radius:5px;"></div>
<div class="b" style="left:1518.2px;top:578.1px;width:25.4px;height:17.2px;background:#221f33;border-radius:5px;"></div>
<div class="b" style="left:1518.2px;top:605.1px;width:25.4px;height:17.2px;background:#221f33;border-radius:5px;"></div>
<div class="b" style="left:1518.2px;top:631.1px;width:25.4px;height:17.2px;background:#221f33;border-radius:5px;"></div>
<div class="b" style="left:1518.2px;top:658.1px;width:25.4px;height:17.2px;background:#221f33;border-radius:5px;"></div>
<div class="b" style="left:1518.2px;top:685.1px;width:25.4px;height:17.2px;background:#221f33;border-radius:5px;"></div>
<div class="b" style="left:1869px;top:353px;width:40px;height:31px;background:#161616;border-radius:15.5px 0 0 15.5px;"></div>
<div class="b" style="left:1872.8px;top:355.8px;width:24.4px;height:24.4px;background:#b0526f;border-radius:12.2px;"></div>
<svg class="i" style="left:1872.8px;top:355.8px;width:24.4px;height:24.4px;fill:none;stroke:#f3e6ea;stroke-width:1.1;stroke-linecap:round;stroke-linejoin:round" viewBox="0 0 24.4 24.4"><path d="M13.8 6.600h2.600q1.700 0 1.700 1.700v1.300"/><path d="M6.300 14.700v1.500q0 1.700 1.700 1.700h2.300"/></svg>
<div class="b" style="left:1889px;top:356.5px;width:1px;height:23px;background:rgba(255,255,255,0.13);"></div>
<div class="b" style="left:1877px;top:782.2px;width:20px;height:21px;border-radius:2.5px;background:linear-gradient(135deg,#5f6672 0%,#5f6672 62%,#5e4a78 84%,#6a2f96 100%);"></div>
<svg class="i" style="left:346.1px;top:670.7px;width:13.75px;height:13.75px;fill:#9198a1;" viewBox="0 0 16 16"><path d="M12.78 5.22a.749.749 0 0 1 0 1.06l-4.25 4.25a.749.749 0 0 1-1.06 0L3.22 6.28a.749.749 0 1 1 1.06-1.06L8 8.939l3.72-3.719a.749.749 0 0 1 1.06 0Z"/></svg>
<svg class="i" style="left:346.1px;top:945.7px;width:13.75px;height:13.75px;fill:#9198a1;" viewBox="0 0 16 16"><path d="M12.78 5.22a.749.749 0 0 1 0 1.06l-4.25 4.25a.749.749 0 0 1-1.06 0L3.22 6.28a.749.749 0 1 1 1.06-1.06L8 8.939l3.72-3.719a.749.749 0 0 1 1.06 0Z"/></svg>
<span class="t" id="t0" style="left:91.30px;top:16px;font-size:12px;line-height:16px;color:#f0f6fc;">mustafaatakli</span>
<span class="t" id="t1" style="left:171.42px;top:15px;font-size:16px;line-height:19px;color:#9198a1;">/</span>
<span class="t" id="t2" style="left:185.80px;top:16px;font-size:12px;line-height:16px;color:#f0f6fc;font-weight:700;-webkit-text-stroke:0;transform:scaleX(0.9815);">Goruntu-Isleme-Ile-CNN-Model-Performans-Analizi</span>
<span class="t" id="t3" style="left:1413.40px;top:16px;font-size:12px;line-height:16px;color:#9198a1;transform:scaleX(0.9264);">Type</span>
<span class="t" id="t4" style="left:1445.94px;top:17px;font-size:10.5px;line-height:14px;color:#9198a1;">/</span>
<span class="t" id="t5" style="left:1458.00px;top:16px;font-size:12px;line-height:16px;color:#9198a1;transform:scaleX(0.9725);">to search</span>
<span class="t" id="t6" style="left:41.50px;top:57px;font-size:12px;line-height:16px;color:#f0f6fc;font-weight:700;-webkit-text-stroke:0;transform:scaleX(0.9367);">Code</span>
<span class="t" id="t7" style="left:111.60px;top:57px;font-size:12px;line-height:16px;color:#f0f6fc;transform:scaleX(0.8995);">Issues</span>
<span class="t" id="t8" style="left:185.80px;top:57px;font-size:12px;line-height:16px;color:#f0f6fc;transform:scaleX(0.9658);">Pull requests</span>
<span class="t" id="t9" style="left:296.60px;top:57px;font-size:12px;line-height:16px;color:#f0f6fc;transform:scaleX(0.9832);">Actions</span>
<span class="t" id="t10" style="left:378.30px;top:57px;font-size:12px;line-height:16px;color:#f0f6fc;transform:scaleX(0.9617);">Projects</span>
<span class="t" id="t11" style="left:462.80px;top:57px;font-size:12px;line-height:16px;color:#f0f6fc;">Wiki</span>
<span class="t" id="t12" style="left:528.40px;top:57px;font-size:12px;line-height:16px;color:#f0f6fc;transform:scaleX(0.9594);">Security</span>
<span class="t" id="t13" style="left:613.60px;top:57px;font-size:12px;line-height:16px;color:#f0f6fc;transform:scaleX(0.9768);">Insights</span>
<span class="t" id="t14" style="left:696.70px;top:57px;font-size:12px;line-height:16px;color:#f0f6fc;">Settings</span>
<span class="t" id="t15" style="left:48.60px;top:105px;font-size:13.9px;line-height:18px;color:#f0f6fc;font-weight:700;-webkit-text-stroke:0;transform:scaleX(0.8529);">Files</span>
<span class="t" id="t16" style="left:45.80px;top:147px;font-size:12px;line-height:16px;color:#f0f6fc;font-weight:700;-webkit-text-stroke:0;transform:scaleX(0.9709);">main</span>
<span class="t" id="t17" style="left:42.50px;top:181px;font-size:12px;line-height:16px;color:#9198a1;transform:scaleX(1.0139);">Go to file</span>
<span class="t" id="t18" style="left:242.93px;top:183px;font-size:9.4px;line-height:13px;color:#f0f6fc;font-weight:700;-webkit-text-stroke:0;font-family:'Liberation Mono',monospace;">t</span>
<span class="t" id="t19" style="left:55.20px;top:219px;font-size:12px;line-height:16px;color:#f0f6fc;transform:scaleX(1.0310);">.gitattributes</span>
<span class="t" id="t20" style="left:55.20px;top:246px;font-size:12px;line-height:16px;color:#f0f6fc;transform:scaleX(1.0309);">.gitignore</span>
<span class="t" id="t21" style="left:55.20px;top:274px;font-size:12px;line-height:16px;color:#f0f6fc;transform:scaleX(0.9279);">README.md</span>
<span class="t" id="t22" style="left:55.00px;top:301px;font-size:12px;line-height:16px;color:#f0f6fc;transform:scaleX(1.0180);">aygaz-goruntu-isleme-proje.py</span>
<span class="t" id="t23" style="left:289.30px;top:105px;font-size:13.9px;line-height:18px;color:#4493f8;transform:scaleX(1.0284);">Goruntu-Isleme-Ile-CNN-Model-Performans-Analizi</span>
<span class="t" id="t24" style="left:617.62px;top:105px;font-size:13.9px;line-height:18px;color:#9198a1;">/</span>
<span class="t" id="t25" style="left:624.90px;top:105px;font-size:13.9px;line-height:18px;color:#f0f6fc;font-weight:700;-webkit-text-stroke:0;transform:scaleX(0.9599);">aygaz-goruntu-isleme-proje.py</span>
<span class="t" id="t26" style="left:326.00px;top:153px;font-size:12px;line-height:16px;color:#f0f6fc;font-weight:700;-webkit-text-stroke:0;transform:scaleX(0.9517);">mustafaatakli</span>
<span class="t" id="t27" style="left:406.50px;top:153px;font-size:12px;line-height:16px;color:#9198a1;transform:scaleX(1.0119);">aygaz-goruntu-ısleme-proje</span>
<span class="t" id="t28" style="left:1723.30px;top:154px;font-size:10px;line-height:13px;color:#9198a1;">587d9d4 · last year</span>
<span class="t" id="t29" style="left:1840.50px;top:154px;font-size:10.3px;line-height:13px;color:#f0f6fc;font-weight:700;-webkit-text-stroke:0;transform:scaleX(0.9610);">History</span>
<span class="t" id="t30" style="left:309.00px;top:207px;font-size:12px;line-height:16px;color:#f0f6fc;font-weight:700;-webkit-text-stroke:0;transform:scaleX(0.9333);">Code</span>
<span class="t" id="t31" style="left:361.40px;top:207px;font-size:12px;line-height:16px;color:#f0f6fc;transform:scaleX(0.9584);">Blame</span>
<span class="t" id="t32" style="left:413.00px;top:207px;font-size:9.6px;line-height:13px;color:#9198a1;font-family:'Liberation Mono',monospace;transform:scaleX(0.9852);">206 lines (158 loc) · 6.71 KB</span>
<span class="t" id="t33" style="left:1317.50px;top:208px;font-size:10px;line-height:13px;color:#f0f6fc;font-weight:700;-webkit-text-stroke:0;transform:scaleX(0.9289);">Raw</span>
<span class="t" id="t34" style="left:1510.90px;top:209px;font-size:12px;line-height:16px;color:#f0f6fc;font-weight:700;-webkit-text-stroke:0;transform:scaleX(0.9177);">Symbols</span>
<span class="t" id="t35" style="left:1511.00px;top:237px;font-size:10px;line-height:13px;color:#9198a1;transform:scaleX(1.0339);">Find definitions and references for functions and other symbols in this file by</span>
<span class="t" id="t36" style="left:1511.00px;top:253px;font-size:10px;line-height:13px;color:#9198a1;transform:scaleX(1.0314);">clicking a symbol below or in the code.</span>
<span class="t" id="t37" style="left:1539.50px;top:280px;font-size:12px;line-height:16px;color:#9198a1;transform:scaleX(0.9795);">Filter symbols</span>
<span class="t" id="t38" style="left:1859.13px;top:283px;font-size:9.4px;line-height:13px;color:#f0f6fc;font-weight:700;-webkit-text-stroke:0;font-family:'Liberation Mono',monospace;">r</span>
<span class="t" id="t39" style="left:1521.20px;top:312px;font-size:10px;line-height:13px;color:#ffa657;font-weight:700;-webkit-text-stroke:0;transform:scaleX(0.9373);">const</span>
<span class="t" id="t40" style="left:1556.00px;top:311px;font-size:12px;line-height:16px;color:#f0f6fc;transform:scaleX(0.8746);">IMAGE_SIZE</span>
<span class="t" id="t41" style="left:1521.20px;top:339px;font-size:10px;line-height:13px;color:#ffa657;font-weight:700;-webkit-text-stroke:0;transform:scaleX(0.9373);">const</span>
<span class="t" id="t42" style="left:1556.00px;top:338px;font-size:12px;line-height:16px;color:#f0f6fc;transform:scaleX(0.8615);">BATCH_SIZE</span>
<span class="t" id="t43" style="left:1521.20px;top:365px;font-size:10px;line-height:13px;color:#ffa657;font-weight:700;-webkit-text-stroke:0;transform:scaleX(0.9373);">const</span>
<span class="t" id="t44" style="left:1556.00px;top:364px;font-size:12px;line-height:16px;color:#f0f6fc;transform:scaleX(0.8740);">EPOCHS</span>
<span class="t" id="t45" style="left:1521.20px;top:392px;font-size:10px;line-height:13px;color:#ffa657;font-weight:700;-webkit-text-stroke:0;transform:scaleX(0.9373);">const</span>
<span class="t" id="t46" style="left:1556.00px;top:391px;font-size:12px;line-height:16px;color:#f0f6fc;transform:scaleX(0.8839);">NUM_CLASSES</span>
<span class="t" id="t47" style="left:1521.20px;top:419px;font-size:10px;line-height:13px;color:#ffa657;font-weight:700;-webkit-text-stroke:0;transform:scaleX(0.9373);">const</span>
<span class="t" id="t48" style="left:1556.00px;top:418px;font-size:12px;line-height:16px;color:#f0f6fc;transform:scaleX(0.8512);">TRAIN_TEST_SPLIT</span>
<span class="t" id="t49" style="left:1521.20px;top:446px;font-size:10px;line-height:13px;color:#ffa657;font-weight:700;-webkit-text-stroke:0;transform:scaleX(0.9373);">const</span>
<span class="t" id="t50" style="left:1556.00px;top:445px;font-size:12px;line-height:16px;color:#f0f6fc;transform:scaleX(0.8741);">MAX_IMAGES_PER_CLASS</span>
<span class="t" id="t51" style="left:1521.20px;top:473px;font-size:10px;line-height:13px;color:#ffa657;font-weight:700;-webkit-text-stroke:0;transform:scaleX(0.9373);">const</span>
<span class="t" id="t52" style="left:1556.00px;top:472px;font-size:12px;line-height:16px;color:#f0f6fc;transform:scaleX(0.9013);">DATA_PATH</span>
<span class="t" id="t53" style="left:1521.20px;top:499px;font-size:10px;line-height:13px;color:#ffa657;font-weight:700;-webkit-text-stroke:0;transform:scaleX(0.9373);">const</span>
<span class="t" id="t54" style="left:1556.00px;top:498px;font-size:12px;line-height:16px;color:#f0f6fc;transform:scaleX(0.8987);">OUTPUT_PATH</span>
<span class="t" id="t55" style="left:1521.20px;top:526px;font-size:10px;line-height:13px;color:#ffa657;font-weight:700;-webkit-text-stroke:0;transform:scaleX(0.9373);">const</span>
<span class="t" id="t56" style="left:1556.00px;top:525px;font-size:12px;line-height:16px;color:#f0f6fc;transform:scaleX(0.8364);">CLASSES</span>
<span class="t" id="t57" style="left:1521.20px;top:553px;font-size:10px;line-height:13px;color:#d2a8ff;font-weight:700;-webkit-text-stroke:0;transform:scaleX(0.9474);">func</span>
<span class="t" id="t58" style="left:1551.20px;top:552px;font-size:12px;line-height:16px;color:#f0f6fc;transform:scaleX(0.9857);">verify_data_directory</span>
<span class="t" id="t59" style="left:1521.20px;top:580px;font-size:10px;line-height:13px;color:#d2a8ff;font-weight:700;-webkit-text-stroke:0;transform:scaleX(0.9474);">func</span>
<span class="t" id="t60" style="left:1551.20px;top:579px;font-size:12px;line-height:16px;color:#f0f6fc;transform:scaleX(0.9577);">load_and_preprocess_data</span>
<span class="t" id="t61" style="left:1521.20px;top:607px;font-size:10px;line-height:13px;color:#d2a8ff;font-weight:700;-webkit-text-stroke:0;transform:scaleX(0.9474);">func</span>
<span class="t" id="t62" style="left:1551.20px;top:606px;font-size:12px;line-height:16px;color:#f0f6fc;transform:scaleX(0.9672);">create_cnn_model</span>
<span class="t" id="t63" style="left:1521.20px;top:633px;font-size:10px;line-height:13px;color:#d2a8ff;font-weight:700;-webkit-text-stroke:0;transform:scaleX(0.9474);">func</span>
<span class="t" id="t64" style="left:1551.20px;top:632px;font-size:12px;line-height:16px;color:#f0f6fc;transform:scaleX(0.9844);">get_manipulated_images</span>
<span class="t" id="t65" style="left:1521.20px;top:660px;font-size:10px;line-height:13px;color:#d2a8ff;font-weight:700;-webkit-text-stroke:0;transform:scaleX(0.9474);">func</span>
<span class="t" id="t66" style="left:1551.20px;top:659px;font-size:12px;line-height:16px;color:#f0f6fc;transform:scaleX(0.9659);">get_wb_images</span>
<span class="t" id="t67" style="left:1521.20px;top:687px;font-size:10px;line-height:13px;color:#d2a8ff;font-weight:700;-webkit-text-stroke:0;transform:scaleX(0.9474);">func</span>
<span class="t" id="t68" style="left:1551.20px;top:686px;font-size:12px;line-height:16px;color:#f0f6fc;transform:scaleX(1.0109);">main</span>
<span class="t" id="t69" style="left:1876.89px;top:359px;font-size:8.5px;line-height:12px;color:#f3e6ea;font-weight:700;-webkit-text-stroke:0;font-family:'Liberation Sans','Noto Sans CJK SC',sans-serif;">中</span>
<span class="t" id="t70" style="left:1885.21px;top:364px;font-size:9.5px;line-height:13px;color:#f3e6ea;font-weight:700;-webkit-text-stroke:0;">A</span>
<span class="t" id="t71" style="left:1879.43px;top:783px;font-size:11px;line-height:14px;color:#14171d;font-weight:700;-webkit-text-stroke:0;">&gt;</span>
<span class="t" id="t72" style="left:1888.08px;top:783px;font-size:11px;line-height:14px;color:#14171d;font-weight:700;-webkit-text-stroke:0;">&lt;</span>
<span class="t" id="t73" style="left:1885.57px;top:789px;font-size:5.5px;line-height:8px;color:#14171d;font-weight:700;-webkit-text-stroke:0;">v</span>
<span class="ln" style="top:242px">1</span>
<span class="cl" style="top:242px"><span class="k">import</span> os</span>
<span class="ln" style="top:259px">2</span>
<span class="cl" style="top:259px"><span class="k">import</span> cv2</span>
<span class="ln" style="top:276px">3</span>
<span class="cl" style="top:276px"><span class="k">import</span> numpy <span class="k">as</span> np</span>
<span class="ln" style="top:294px">4</span>
<span class="cl" style="top:294px"><span class="k">from</span> sklearn.model_selection <span class="k">import</span> train_test_split</span>
<span class="ln" style="top:311px">5</span>
<span class="cl" style="top:311px"><span class="k">from</span> tensorflow.keras.models <span class="k">import</span> <span class="v">Sequential</span></span>
<span class="ln" style="top:328px">6</span>
<span class="cl" style="top:328px"><span class="k">from</span> tensorflow.keras.layers <span class="k">import</span> <span class="v">Conv2D</span>, <span class="v">MaxPooling2D</span>, <span class="v">Dense</span>, <span class="v">Flatten</span>, <span class="v">Dropout</span></span>
<span class="ln" style="top:345px">7</span>
<span class="cl" style="top:345px"><span class="k">from</span> tensorflow.keras.utils <span class="k">import</span> to_categorical</span>
<span class="ln" style="top:362px">8</span>
<span class="cl" style="top:362px"><span class="k">from</span> tensorflow.keras.preprocessing.image <span class="k">import</span> <span class="v">ImageDataGenerator</span></span>
<span class="ln" style="top:380px">9</span>
<span class="ln" style="top:397px">10</span>
<span class="cl" style="top:397px"><span class="m"># Sabit değerler</span></span>
<span class="ln" style="top:414px">11</span>
<span class="cl" style="top:414px"><span class="c">IMAGE_SIZE</span> <span class="c">=</span> (<span class="c">128</span>, <span class="c">128</span>)</span>
<span class="ln" style="top:431px">12</span>
<span class="cl" style="top:431px"><span class="c">BATCH_SIZE</span> <span class="c">=</span> <span class="c">32</span></span>
<span class="ln" style="top:448px">13</span>
<span class="cl" style="top:448px"><span class="c">EPOCHS</span> <span class="c">=</span> <span class="c">20</span></span>
<span class="ln" style="top:465px">14</span>
<span class="cl" style="top:465px"><span class="c">NUM_CLASSES</span> <span class="c">=</span> <span class="c">10</span></span>
<span class="ln" style="top:483px">15</span>
<span class="cl" style="top:483px"><span class="c">TRAIN_TEST_SPLIT</span> <span class="c">=</span> <span class="c">0.3</span></span>
<span class="ln" style="top:500px">16</span>
<span class="cl" style="top:500px"><span class="c">MAX_IMAGES_PER_CLASS</span> <span class="c">=</span> <span class="c">650</span></span>
<span class="ln" style="top:517px">17</span>
<span class="ln" style="top:534px">18</span>
<span class="cl" style="top:534px"><span class="m"># Veri yolu ayarlari</span></span>
<span class="ln" style="top:551px">19</span>
<span class="cl" style="top:551px"><span class="c">DATA_PATH</span> <span class="c">=</span> <span class="s">r&quot;C:\Users\matak\PycharmProjects\pythonProject\Animals_with_Attributes2\JPEGImages&quot;</span></span>
<span class="ln" style="top:569px">20</span>
<span class="cl" style="top:569px"><span class="c">OUTPUT_PATH</span> <span class="c">=</span> <span class="s">r&quot;C:\Users\matak\PycharmProjects\pythonProject\Animals_with_Attributes2\JPEGImages\output&quot;</span></span>
<span class="ln" style="top:586px">21</span>
<span class="cl" style="top:586px"><span class="m"># Sınıf isimleri</span></span>
<span class="ln" style="top:603px">22</span>
<span class="cl" style="top:603px"><span class="c">CLASSES</span> <span class="c">=</span> [<span class="s">&#x27;collie&#x27;</span>, <span class="s">&#x27;dolphin&#x27;</span>, <span class="s">&#x27;elephant&#x27;</span>, <span class="s">&#x27;fox&#x27;</span>, <span class="s">&#x27;moose&#x27;</span>,</span>
<span class="ln" style="top:620px">23</span>
<span class="cl" style="top:620px">           <span class="s">&#x27;rabbit&#x27;</span>, <span class="s">&#x27;sheep&#x27;</span>, <span class="s">&#x27;squirrel&#x27;</span>, <span class="s">&#x27;giant+panda&#x27;</span>, <span class="s">&#x27;polar+bear&#x27;</span>]</span>
<span class="ln" style="top:637px">24</span>
<span class="ln" style="top:655px">25</span>
<span class="ln" style="top:672px">26</span>
<span class="cl" style="top:672px"><span class="k">def</span> <span class="e">verify_data_directory</span>():</span>
<span class="ln" style="top:689px">27</span>
<span class="cl" style="top:689px">    <span class="s">&quot;&quot;&quot;Veri dizininin doğruluğunu kontrol et.&quot;&quot;&quot;</span></span>
<span class="ln" style="top:706px">28</span>
<span class="cl" style="top:706px">    <span class="k">if</span> <span class="k">not</span> os.<span class="c">path</span>.<span class="c">exists</span>(<span class="c">DATA_PATH</span>):</span>
<span class="ln" style="top:723px">29</span>
<span class="cl" style="top:723px">        <span class="k">raise</span> <span class="e">FileNotFoundError</span>(<span class="s">f&quot;Veri dizini bulunamadı: {</span><span class="c">DATA_PATH</span><span class="s">}&quot;</span>)</span>
<span class="ln" style="top:740px">30</span>
<span class="ln" style="top:758px">31</span>
<span class="cl" style="top:758px">    missing_classes <span class="c">=</span> []</span>
<span class="ln" style="top:775px">32</span>
<span class="cl" style="top:775px">    <span class="k">for</span> class_name <span class="c">in</span> <span class="c">CLASSES</span>:</span>
<span class="ln" style="top:792px">33</span>
<span class="cl" style="top:792px">        class_path <span class="c">=</span> os.<span class="c">path</span>.<span class="c">join</span>(<span class="c">DATA_PATH</span>, class_name)</span>
<span class="ln" style="top:809px">34</span>
<span class="cl" style="top:809px">        <span class="k">if</span> <span class="k">not</span> os.<span class="c">path</span>.<span class="c">exists</span>(class_path):</span>
<span class="ln" style="top:826px">35</span>
<span class="cl" style="top:826px">            missing_classes.<span class="c">append</span>(class_name)</span>
<span class="ln" style="top:844px">36</span>
<span class="ln" style="top:861px">37</span>
<span class="cl" style="top:861px">    <span class="k">if</span> missing_classes:</span>
<span class="ln" style="top:878px">38</span>
<span class="cl" style="top:878px">        <span class="k">raise</span> <span class="e">FileNotFoundError</span>(</span>
<span class="ln" style="top:895px">39</span>
<span class="cl" style="top:895px">            <span class="s">f&quot;Aşağıdaki sınıf dizinleri eksik: {</span><span class="s">&#x27;, &#x27;</span>.<span class="c">join</span>(missing_classes)<span class="s">}&quot;</span>)</span>
<span class="ln" style="top:912px">40</span>
<span class="ln" style="top:930px">41</span>
<span class="ln" style="top:947px">42</span>
<span class="cl" style="top:947px"><span class="k">def</span> <span class="e">load_and_preprocess_data</span>():</span>
<span class="ln" style="top:964px">43</span>
<span class="cl" style="top:964px">    <span class="s">&quot;&quot;&quot;Veriyi yükle ve ön işleme uygula.&quot;&quot;&quot;</span></span>
<span class="ln" style="top:981px">44</span>
<span class="cl" style="top:981px">    <span class="e">print</span>(<span class="s">f&quot;Veriler yükleniyor: {</span><span class="c">DATA_PATH</span><span class="s">}&quot;</span>)</span>
</body></html>
